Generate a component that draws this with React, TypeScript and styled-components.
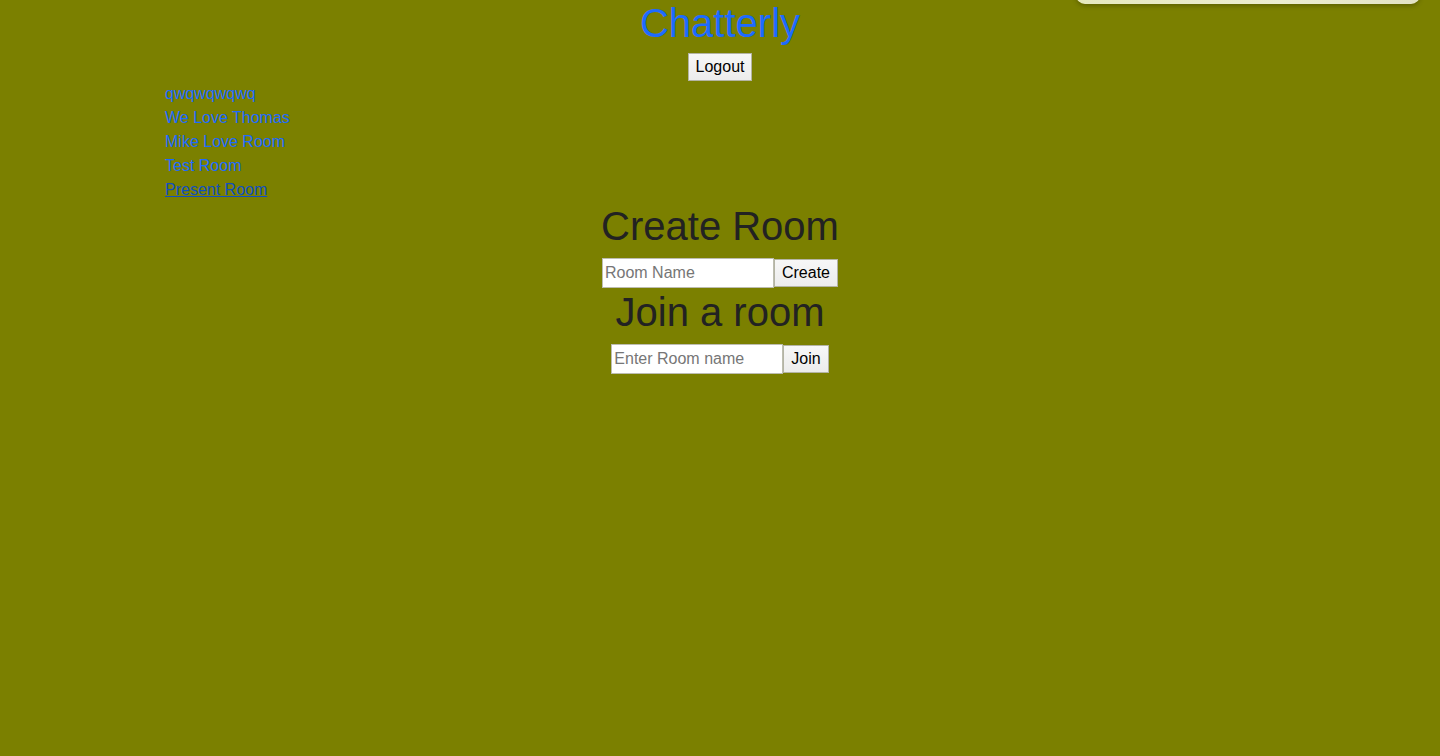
import React from "react";
import styled, { createGlobalStyle } from "styled-components";

const Global = createGlobalStyle`
  html, body {
    margin: 0;
    padding: 0;
    background: #7b8000;
    font-family: "Liberation Sans", Arial, Helvetica, sans-serif;
  }
  * { box-sizing: border-box; }
`;

const Page = styled.div`
  position: relative;
  min-height: 756px;
  background: #7b8000;
  overflow: hidden;
`;

const TopPanel = styled.div`
  position: absolute;
  top: -12px;
  left: 1076px;
  width: 344px;
  height: 16px;
  border-radius: 0 0 9px 9px;
  background: linear-gradient(90deg, #e6e8bf, #ecedd0 60%, #e2e2c4);
  box-shadow: 0 2px 4px rgba(60, 60, 0, 0.45);
`;

const Header = styled.header`
  display: flex;
  flex-direction: column;
  align-items: center;
`;

const Title = styled.h1`
  margin: 0;
  font-size: 40px;
  line-height: 46px;
  font-weight: 400;
  color: #1d6bff;
`;

const Button = styled.button`
  height: 28px;
  padding: 0 7px;
  font-family: "Liberation Sans", Arial, Helvetica, sans-serif;
  font-size: 16px;
  color: #000;
  background: linear-gradient(#f7f7f7, #ececec);
  border: 1px solid #b4b4a4;
  border-radius: 0;
  cursor: pointer;
`;

const LogoutButton = styled(Button)`
  margin-top: 7px;
`;

const RoomList = styled.nav`
  display: flex;
  flex-direction: column;
  align-items: flex-start;
  padding-left: 165px;
  margin-top: 1px;
  margin-bottom: 1px;
`;

const RoomLink = styled.a<{ $active?: boolean }>`
  font-size: 16px;
  line-height: 24px;
  color: ${(p) => (p.$active ? "#0f4fc2" : "#1d6bff")};
  text-decoration: ${(p) => (p.$active ? "underline" : "none")};
  cursor: pointer;
`;

const Section = styled.section`
  display: flex;
  flex-direction: column;
  align-items: center;
`;

const Heading = styled.h2`
  margin: 0;
  font-size: 40px;
  line-height: 46px;
  font-weight: 400;
  color: #222;
`;

const FormRow = styled.form`
  display: flex;
  align-items: flex-end;
  padding: 9px 0 1px;
  height: 40px;
`;

const TextInput = styled.input`
  width: 172px;
  height: 30px;
  padding: 0 2px;
  font-family: "Liberation Sans", Arial, Helvetica, sans-serif;
  font-size: 16px;
  color: #000;
  background: #fff;
  border: 1px solid #bdbdb0;
  border-radius: 0;
  outline: none;
  &::placeholder {
    color: #767676;
  }
`;

const FormButton = styled(Button)`
  margin-bottom: 1px;
`;

const rooms = ["qwqwqwqwq", "We Love Thomas", "Mike Love Room", "Test Room", "Present Room"];

export default function App() {
  return (
    <Page>
      <Global />
      <TopPanel />
      <Header>
        <Title>Chatterly</Title>
        <LogoutButton type="button">Logout</LogoutButton>
      </Header>
      <RoomList>
        {rooms.map((r, i) => (
          <RoomLink key={r} $active={i === rooms.length - 1}>
            {r}
          </RoomLink>
        ))}
      </RoomList>
      <Section>
        <Heading>Create Room</Heading>
        <FormRow onSubmit={(e) => e.preventDefault()}>
          <TextInput placeholder="Room Name" />
          <FormButton type="submit">Create</FormButton>
        </FormRow>
        <Heading>Join a room</Heading>
        <FormRow onSubmit={(e) => e.preventDefault()}>
          <TextInput placeholder="Enter Room name" />
          <FormButton type="submit">Join</FormButton>
        </FormRow>
      </Section>
    </Page>
  );
}
